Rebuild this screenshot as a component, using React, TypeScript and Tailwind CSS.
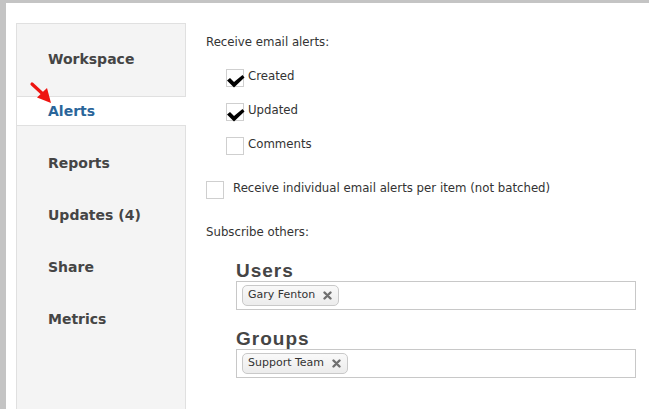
import React from 'react';

const navItems = ['Workspace', 'Alerts', 'Reports', 'Updates (4)', 'Share', 'Metrics'];

const Check: React.FC<{ checked?: boolean; className?: string }> = ({ checked, className }) => (
    <div className={`relative w-[18px] h-[18px] border border-[#cfcfcf] bg-white shrink-0 ${className ?? ''}`}>
        {checked && (
            <svg viewBox="0 0 18 18" className="absolute left-0 top-0 w-[18px] h-[18px] overflow-visible">
                <polygon points="0,10.5 3,8 7,12 15.5,5 17.5,7.5 7,17.5" fill="#000" />
            </svg>
        )}
    </div>
);

const Chip: React.FC<{ label: string }> = ({ label }) => (
    <span className="inline-flex items-center h-[21px] pl-[5px] pr-[6px] rounded-[5px] border border-[#c9c9c9] bg-gradient-to-b from-[#f9f9f9] to-[#ececec] text-[11px] text-[#333]">
        {label}
        <svg viewBox="0 0 9 9" className="ml-[8px] w-[9px] h-[9px]">
            <path d="M1.5 1.5 L7.5 7.5 M7.5 1.5 L1.5 7.5" stroke="#6f6f6f" strokeWidth="2.4" strokeLinecap="round" />
        </svg>
    </span>
);

const App: React.FC = () => {
    return (
        <div
            className="relative w-[649px] h-[409px] overflow-hidden bg-white border-t-[3px] border-l-[6px] border-[#c4c4c4] flex"
            style={{ fontFamily: '"DejaVu Sans", Verdana, sans-serif' }}
        >
            {/* Sidebar */}
            <div className="ml-[10px] mt-[20px] w-[170px] h-[420px] shrink-0 bg-[#f4f4f4] border border-[#e0e0e0] pt-[20px] flex flex-col gap-[22px]">
                {navItems.map((item) => {
                    const active = item === 'Alerts';
                    return (
                        <div
                            key={item}
                            className={
                                active
                                    ? 'h-[30px] -mr-px bg-white border-y border-[#e0e0e0] pl-[31px] flex items-center text-[14px] font-bold text-[#2a659a]'
                                    : 'h-[30px] border-y border-transparent pl-[31px] flex items-center text-[14px] font-bold text-[#454545]'
                            }
                        >
                            {item}
                        </div>
                    );
                })}
            </div>

            {/* Content */}
            <div className="pl-[20px] pt-[31px] flex flex-col text-[11.75px] text-[#333]">
                <div className="leading-[16px]">Receive email alerts:</div>

                <div className="mt-[11px] pl-[20px] flex flex-col">
                    <label className="h-[34px] flex items-center gap-[4px]">
                        <Check checked />
                        <span className="-mt-[2px]">Created</span>
                    </label>
                    <label className="h-[34px] flex items-center gap-[4px]">
                        <Check checked />
                        <span className="-mt-[2px]">Updated</span>
                    </label>
                    <label className="h-[34px] flex items-center gap-[4px]">
                        <Check />
                        <span className="-mt-[2px]">Comments</span>
                    </label>
                </div>

                <label className="mt-[10px] h-[34px] flex items-center gap-[9px]">
                    <Check />
                    <span className="-mt-[2px]">Receive individual email alerts per item (not batched)</span>
                </label>

                <div className="mt-[17px] leading-[16px]">Subscribe others:</div>

                <div className="mt-[21px] pl-[30px] flex flex-col">
                    <div
                        className="text-[19px] leading-[20px] font-bold tracking-[1px] text-[#454545]"
                        style={{ fontFamily: '"Liberation Sans", Arial, sans-serif' }}
                    >
                        Users
                    </div>
                    <div className="w-[400px] h-[29px] border border-[#c8c8c8] pl-[5px] pt-[3px]">
                        <Chip label="Gary Fenton" />
                    </div>

                    <div
                        className="mt-[18px] text-[19px] leading-[21px] font-bold tracking-[1px] text-[#454545]"
                        style={{ fontFamily: '"Liberation Sans", Arial, sans-serif' }}
                    >
                        Groups
                    </div>
                    <div className="w-[400px] h-[29px] border border-[#c8c8c8] pl-[5px] pt-[3px]">
                        <Chip label="Support Team" />
                    </div>
                </div>
            </div>

            {/* Red pointer arrow */}
            <svg viewBox="0 0 30 30" className="absolute left-[18px] top-[74px] w-[30px] h-[30px] overflow-visible">
                <line x1="8" y1="7" x2="21" y2="19" stroke="#ee1410" strokeWidth="3.2" strokeLinecap="round" />
                <polygon points="27,26 13,20.5 23,11" fill="#ee1410" />
            </svg>
        </div>
    );
};

export default App;
